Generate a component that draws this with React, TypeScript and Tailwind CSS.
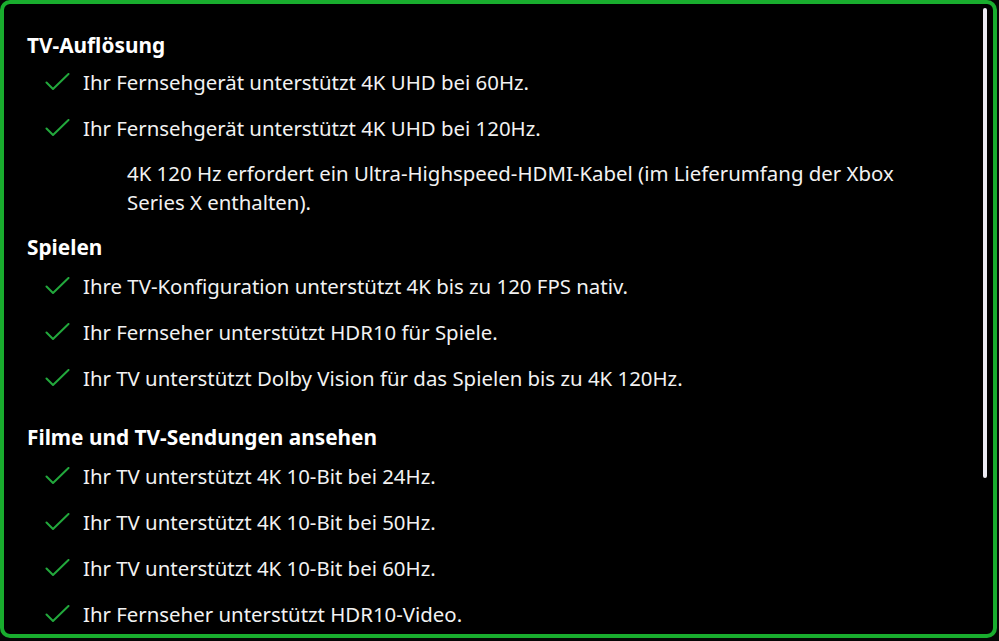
import React from 'react';

interface Section {
  title: string;
  items: string[];
  note?: string;
}

const sections: Section[] = [
  {
    title: 'TV-Auflösung',
    items: [
      'Ihr Fernsehgerät unterstützt 4K UHD bei 60Hz.',
      'Ihr Fernsehgerät unterstützt 4K UHD bei 120Hz.',
    ],
    note: '4K 120 Hz erfordert ein Ultra-Highspeed-HDMI-Kabel (im Lieferumfang der Xbox Series X enthalten).',
  },
  {
    title: 'Spielen',
    items: [
      'Ihre TV-Konfiguration unterstützt 4K bis zu 120 FPS nativ.',
      'Ihr Fernseher unterstützt HDR10 für Spiele.',
      'Ihr TV unterstützt Dolby Vision für das Spielen bis zu 4K 120Hz.',
    ],
  },
  {
    title: 'Filme und TV-Sendungen ansehen',
    items: [
      'Ihr TV unterstützt 4K 10-Bit bei 24Hz.',
      'Ihr TV unterstützt 4K 10-Bit bei 50Hz.',
      'Ihr TV unterstützt 4K 10-Bit bei 60Hz.',
      'Ihr Fernseher unterstützt HDR10-Video.',
    ],
  },
];

const Check = () => (
  <svg width="25" height="18" viewBox="0 0 25 18" fill="none" className="shrink-0">
    <path d="M1.5 9.5 L8 16 L23.5 1" stroke="#22a83c" strokeWidth="2" strokeLinecap="round" strokeLinejoin="round" />
  </svg>
);

const CheckRow = ({ text }: { text: string }) => (
  <div className="flex h-[46px] items-center pl-[18px]">
    <Check />
    <span className="ml-[13px] text-[20.4px] text-[#f2f2f2]">{text}</span>
  </div>
);

export default function App() {
  return (
    <div
      className="h-[641px] w-[999px] overflow-hidden bg-[#050505]"
      style={{ fontFamily: '"Noto Sans", "Open Sans", sans-serif' }}
    >
      <div className="relative h-[638px] w-[997px] rounded-[10px] border-4 border-[#19ad2e] bg-black">
        <div className="absolute right-[6px] top-[4px] h-[470px] w-[4px] rounded-sm bg-[#ecebf3]" />
        <div className="flex flex-col pl-[23px] pt-[29px]">
          {sections.map((s, i) => (
            <div key={s.title} className={i === 1 ? 'mt-[18px]' : i === 2 ? 'mt-[24px]' : ''}>
              <div className="flex h-[26px] items-center text-[20.8px] font-bold text-white">{s.title}</div>
              <div className={i > 0 ? 'mt-[2px]' : ''}>
                {s.items.map((t) => (
                  <CheckRow key={t} text={t} />
                ))}
              </div>
              {s.note && (
                <p className="mt-[8px] w-[900px] pl-[100px] text-[20.4px] leading-[29px] text-[#f2f2f2]">{s.note}</p>
              )}
            </div>
          ))}
        </div>
      </div>
    </div>
  );
}
